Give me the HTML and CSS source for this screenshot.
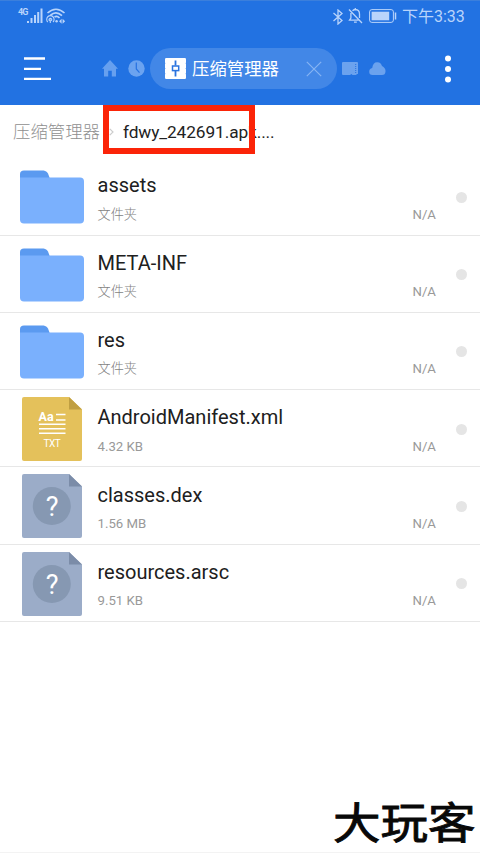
FILE: index.html
```html
<!DOCTYPE html>
<html lang="zh-CN">
<head>
<meta charset="utf-8">
<title>压缩管理器</title>
<link rel="stylesheet" href="styles.css">
</head>
<body>
<svg width="0" height="0" class="defs">
  <symbol id="folder" viewBox="0 0 64 54">
    <path d="M0 20V4Q0 .5 4 .5H22C27 .5 28 3 29.5 7.5L32 20Z" fill="#5b9af0"/>
    <path d="M0 7.5H60Q64 7.5 64 11.5V49.5Q64 53.5 60 53.5H4Q0 53.5 0 49.5Z" fill="#7ab0fd"/>
  </symbol>
  <symbol id="unknown" viewBox="0 0 60 64">
    <path d="M2 0H47L60 12.5V62Q60 64 58 64H2Q0 64 0 62V2Q0 0 2 0Z" fill="#9bacc8"/>
    <path d="M47 0L60 12.5H47Z" fill="#7b8ca8"/>
    <circle cx="29.8" cy="32" r="19" fill="#8698b2"/>
  </symbol>
</svg>
<div class="screen">
  <header class="header">
    <div class="status">
      <div class="status-left">
        <span class="net">4G</span>
        <svg class="signal" width="16" height="16" viewBox="0 0 16 16" fill="#b9d4fb"><path d="M0 13h2v2H0zM3.5 10h2v5h-2zM7 7h2v8H7zM10.2 4h2v11h-2zM13.5.5h2V15h-2z"/></svg>
        <svg class="wifi" width="20" height="16" viewBox="0 0 20 16" fill="none" stroke="#b9d4fb" stroke-width="1.6"><path d="M1.5 5Q10-2.5 18.5 5M4.5 7.2Q10 2.2 16 7.6M8.5 9Q11 7.3 13.5 10"/><path d="M1.8 14A3.7 3.7 0 1 1 7 14M3.5 12.8A1.4 1.4 0 1 1 5.3 12.8M4.3 11.5V15" stroke-width="1.1"/><circle cx="10.6" cy="13.3" r="1.2" fill="#b9d4fb" stroke="none"/><path d="M15.6 10.8l-2.5 2.5 2.5 2.5zM16.6 10.8l2.5 2.5-2.5 2.5z" fill="#b9d4fb" stroke="none"/></svg>
      </div>
      <div class="status-right">
        <svg class="bt" width="10" height="16" viewBox="0 0 10 16" fill="none" stroke="#b9d4fb" stroke-width="1.3"><path d="M.5 4L9 11.5 5 15V1L9 4.5.5 12"/></svg>
        <svg class="bell" width="15" height="16" viewBox="0 0 15 16" fill="none" stroke="#b9d4fb" stroke-width="1.3"><path d="M1 1.5L14 15M4.5 2.8Q6 1.5 7.5 1.5Q11.5 1.8 11.5 6V10M2.9 5V10L1.5 12.2H10.5M6 14.2H8.8M7.3 0V1.5"/></svg>
        <svg class="battery" width="28" height="14" viewBox="0 0 28 14"><rect x=".6" y=".6" width="23.8" height="12.8" rx="2.3" fill="none" stroke="#b9d4fb"/><rect x="2.6" y="2.7" width="17.6" height="8.6" fill="#b9d4fb"/><path d="M26.5 3.5V10.5" stroke="#b9d4fb" stroke-width="1.5"/></svg>
        <span class="clock">下午3:33</span>
      </div>
    </div>
    <div class="toolbar">
      <svg class="menu" width="28" height="26" viewBox="0 0 28 26" stroke="#fff" stroke-width="2.3"><path d="M0 2.5H21M0 12.8H17M0 22.8H27"/></svg>
      <svg class="home" width="16" height="17" viewBox="0 0 16 17" fill="#67a0ef"><path d="M8 0L16 8.8H14V16.5H9.8V10.8H6.2V16.5H2V8.8H0Z"/></svg>
      <svg class="recent" width="17" height="17" viewBox="0 0 17 17"><circle cx="8.5" cy="8.5" r="8.2" fill="#6ba3f0"/><path d="M8.3 2.5V9L11.5 12.7" fill="none" stroke="#2672e2" stroke-width="1.2"/></svg>
      <div class="tab">
        <svg class="archive" width="21" height="21" viewBox="0 0 21 21"><rect width="21" height="21" rx="1.2" fill="#fff"/><path d="M0 5.3H.7M0 10.5H.7M0 15.7H.7M20.3 5.3H21M20.3 10.5H21M20.3 15.7H21" stroke="#a9cbfa"/><path d="M10.5 2.5V7.5M10.5 13V18.5" stroke="#2b74df" stroke-width="1.8"/><rect x="7.5" y="8" width="6.2" height="4.6" fill="#fff" stroke="#2b74df" stroke-width="1.5"/></svg>
        <span class="tab-title">压缩管理器</span>
        <svg class="close" width="16" height="16" viewBox="0 0 16 16" stroke="#86b4f3" stroke-width="1.2"><path d="M.8.8L15.2 15.2M15.2.8L.8 15.2"/></svg>
      </div>
      <svg class="card" width="16" height="14" viewBox="0 0 16 14" fill="#6ba2ee"><path d="M1 0H15Q16 0 16 1V12H14.5V13H10.5L9.5 12 8 13H1Q0 13 0 12V1Q0 0 1 0Z"/><path d="M13.7 2V11" stroke="#2672e2" stroke-dasharray="1 1"/></svg>
      <svg class="cloud" width="17" height="14" viewBox="0 0 17 14" fill="#6ba2ee"><path d="M3.5 13Q.2 13 .2 9.7Q.2 6.5 3.2 6Q4-.1 8.5.2Q12 .3 13 4Q16.8 6 16.5 9.5Q16.3 13 13 13Z"/></svg>
      <svg class="more" width="6" height="28" viewBox="0 0 6 28" fill="#fff"><circle cx="3" cy="3.5" r="3"/><circle cx="3" cy="14" r="3"/><circle cx="3" cy="24.6" r="3"/></svg>
    </div>
  </header>
  <nav class="crumbs">
    <span class="crumb-root">压缩管理器</span>
    <svg class="chevron" width="5" height="8" viewBox="0 0 5 8" fill="none" stroke="#ccc" stroke-width="1.2"><path d="M.8.8L4 4 .8 7.2"/></svg>
    <span class="crumb-file">fdwy_242691.apk....</span>
    <div class="highlight"></div>
  </nav>
  <main class="list">
    <div class="row"><svg class="folder"><use href="#folder"/></svg><div class="info"><div class="name">assets</div><div class="sub cjk">文件夹</div></div><span class="na">N/A</span><i class="dot"></i></div>
    <div class="row"><svg class="folder"><use href="#folder"/></svg><div class="info"><div class="name">META-INF</div><div class="sub cjk">文件夹</div></div><span class="na">N/A</span><i class="dot"></i></div>
    <div class="row"><svg class="folder"><use href="#folder"/></svg><div class="info"><div class="name">res</div><div class="sub cjk">文件夹</div></div><span class="na">N/A</span><i class="dot"></i></div>
    <div class="row"><svg class="file" viewBox="0 0 60 64"><path d="M2 0H47L60 12.5V62Q60 64 58 64H2Q0 64 0 62V2Q0 0 2 0Z" fill="#e4c15b"/><path d="M47 0L60 12.5H47Z" fill="#c09f42"/><text class="aa" x="16.5" y="24">Aa</text><path d="M34 17.5H43.5M34 23H43.5M17 27.2H43.5M17 31.8H43.5M17 36.3H43.5" stroke="#fff" stroke-width="1.6"/><text class="txt" x="21.5" y="50.3">TXT</text></svg><div class="info"><div class="name">AndroidManifest.xml</div><div class="sub">4.32 KB</div></div><span class="na">N/A</span><i class="dot"></i></div>
    <div class="row"><svg class="file" viewBox="0 0 60 64"><use href="#unknown"/><text class="question" x="30.2" y="41.7">?</text></svg><div class="info"><div class="name">classes.dex</div><div class="sub">1.56 MB</div></div><span class="na">N/A</span><i class="dot"></i></div>
    <div class="row"><svg class="file" viewBox="0 0 60 64"><use href="#unknown"/><text class="question" x="30.2" y="41.7">?</text></svg><div class="info"><div class="name">resources.arsc</div><div class="sub">9.51 KB</div></div><span class="na">N/A</span><i class="dot"></i></div>
  </main>
  <div class="watermark">大玩客</div>
</div>
</body>
</html>
```
FILE: styles.css
```css
* { box-sizing: border-box; }
body { margin: 0; background: #fff; font-family: Roboto, "Noto Sans CJK SC", sans-serif; }
svg { display: block; flex: none; }
.defs { position: absolute; }
.screen { position: relative; width: 480px; height: 853px; display: flex; flex-direction: column; border-bottom: 1px solid #f3f3f3; }
.header { height: 105px; flex: none; background: #2272e2; border-top: 1px solid #3b7fdc; }
.status { height: 31px; display: flex; justify-content: space-between; color: #b9d4fb; }
.status-left { display: flex; padding-left: 18px; }
.net { width: 9px; font-size: 9px; line-height: 10px; padding-top: 6px; font-weight: 700; letter-spacing: -.9px; }
.signal { margin-top: 7px; }
.wifi { margin: 7px 0 0 3px; }
.status-right { display: flex; padding-right: 16px; }
.bt { margin-top: 8px; }
.bell { margin: 7px 0 0 5px; }
.battery { margin: 8px 0 0 6px; }
.clock { font-size: 16px; line-height: 31px; margin-left: 5px; width: 62px; white-space: nowrap; }
.toolbar { height: 73px; display: flex; align-items: center; }
.menu { margin-left: 24px; }
.home { margin-left: 50px; }
.recent { margin-left: 10px; }
.tab { margin-left: 5px; width: 187px; height: 41px; border-radius: 21px; background: #4287e7; display: flex; align-items: center; padding-left: 15px; flex: none; }
.tab-title { margin-left: 6px; width: 88px; font-size: 17.4px; line-height: 24px; color: #fff; white-space: nowrap; }
.close { margin-left: 26px; }
.card { margin-left: 5px; }
.cloud { margin-left: 11px; }
.more { margin-left: 59px; }
.crumbs { position: relative; height: 53.3px; flex: none; display: flex; align-items: center; padding-left: 13px; line-height: 24px; }
.crumb-root { width: 87px; font-size: 17.4px; color: #8f8f8f; white-space: nowrap; font-weight: 300; }
.chevron { margin-left: 9px; }
.crumb-file { margin-left: 9px; font-size: 17.3px; letter-spacing: -.1px; color: #222; white-space: nowrap; }
.highlight { position: absolute; left: 103px; top: 0; width: 152px; height: 49px; border: 6px solid #fb2408; }
.row { height: 77.3px; display: flex; align-items: flex-start; border-bottom: 1.3px solid #e7e7e7; }
.folder { width: 64px; height: 54px; margin: 12px 0 0 20px; }
.file { width: 60px; height: 64px; margin: 7px 2px 0 22px; }
.info { margin-left: 13.5px; width: 315px; padding-top: 15.2px; }
.name { font-size: 20px; line-height: 25px; color: #202020; white-space: nowrap; }
.sub { margin-top: 8.4px; font-size: 13.2px; line-height: 16px; color: #999; }
.cjk { color: #7f7f7f; font-weight: 300; }
.na { width: 24.5px; margin-top: 48.5px; font-size: 13.2px; line-height: 16px; color: #999; }
.dot { width: 11px; height: 11px; margin: 33.5px 0 0 18.5px; border-radius: 50%; background: #e5e5e5; }
.aa { font-size: 12.5px; font-weight: 700; fill: #fff; }
.txt { font-size: 10px; letter-spacing: -.5px; fill: #fff; }
.question { font-size: 27px; text-anchor: middle; fill: #fff; }
.watermark { position: absolute; left: 333px; top: 797px; font: 400 47.5px/48px "Noto Sans CJK SC", sans-serif; color: #080808; -webkit-text-stroke: 1px #080808; transform: scaleY(.9); white-space: nowrap; }
```
